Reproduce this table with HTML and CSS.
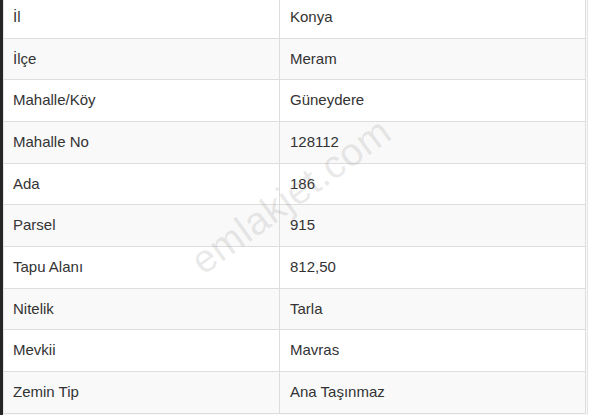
FILE: index.html
```html
<!DOCTYPE html>
<html lang="tr">
<head>
<meta charset="utf-8">
<link rel="stylesheet" href="styles.css">
</head>
<body>
<div class="sheet">
  <table class="info">
    <tbody>
      <tr><td class="key">İl</td><td class="val">Konya</td></tr>
      <tr><td class="key">İlçe</td><td class="val">Meram</td></tr>
      <tr><td class="key">Mahalle/Köy</td><td class="val">Güneydere</td></tr>
      <tr><td class="key">Mahalle No</td><td class="val">128112</td></tr>
      <tr><td class="key">Ada</td><td class="val">186</td></tr>
      <tr><td class="key">Parsel</td><td class="val">915</td></tr>
      <tr><td class="key">Tapu Alanı</td><td class="val">812,50</td></tr>
      <tr><td class="key">Nitelik</td><td class="val">Tarla</td></tr>
      <tr><td class="key">Mevkii</td><td class="val">Mavras</td></tr>
      <tr><td class="key">Zemin Tip</td><td class="val">Ana Taşınmaz</td></tr>
    </tbody>
  </table>
  <div class="watermark">emlakjet.com</div>
</div>
</body>
</html>
```
FILE: styles.css
```css
html, body {
  margin: 0;
  padding: 0;
  background: #fff;
  height: 415px;
  overflow: hidden;
}
body {
  font-family: "Liberation Sans", Arial, sans-serif;
  font-size: 15px;
  color: #333;
}
.sheet {
  position: relative;
  width: 583px;
  height: 418px;
  margin-top: -3px;
  border-left: 3px solid #262626;
  border-right: 1px solid #e4e4e4;
  padding-right: 1px;
  background: #fafafa;
}
.info {
  width: 100%;
  border-collapse: collapse;
  table-layout: fixed;
  border-left: 1px solid #e4e4e4;
  border-right: 1px solid #ddd;
  border-bottom: 1px solid #ddd;
  background: #fff;
}
.info td {
  padding: 10px 10px;
  line-height: 20.65px;
  border-top: 1px solid #ddd;
  white-space: nowrap;
}
.info tr:first-child td {
  border-top: none;
}
.info tr:nth-child(even) td {
  background: #f9f9f9;
}
.info td.key {
  width: 256px;
  padding-left: 9px;
  border-right: 1px solid #ddd;
}
.info td.val {
  padding-left: 10px;
}
.watermark {
  position: absolute;
  left: 170px;
  top: 177px;
  font-family: "Liberation Sans", Arial, sans-serif;
  font-size: 39px;
  letter-spacing: 0.5px;
  color: rgba(120, 120, 120, 0.16);
  transform: rotate(-36deg);
  transform-origin: center;
  pointer-events: none;
}
```
